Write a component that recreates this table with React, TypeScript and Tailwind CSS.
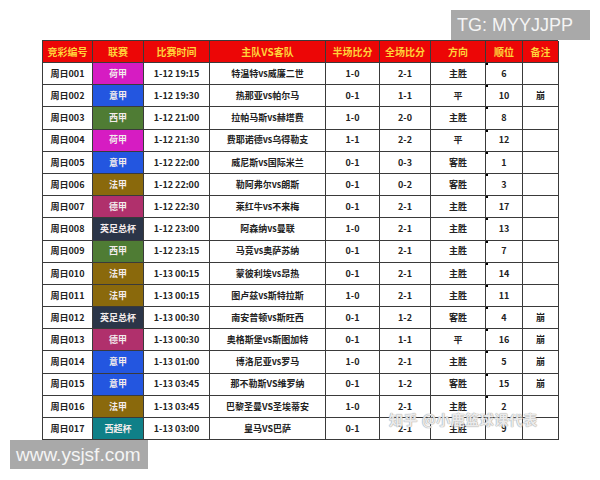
import React from "react";

type Row = {
  id: string;
  league: string;
  time: string;
  teams: string;
  half: string;
  full: string;
  dir: string;
  rank: string;
  note: string;
};

const leagueColor: Record<string, string> = {
  荷甲: "bg-[#d61cc2]",
  意甲: "bg-[#2356e0]",
  西甲: "bg-[#4f7c34]",
  法甲: "bg-[#8a690c]",
  德甲: "bg-[#b0306c]",
  英足总杯: "bg-[#2b3548]",
  西超杯: "bg-[#0f8088]",
};

const rows: Row[] = [
  { id: "周日001", league: "荷甲", time: "1-12 19:15", teams: "特温特vs威廉二世", half: "1-0", full: "2-1", dir: "主胜", rank: "6", note: "" },
  { id: "周日002", league: "意甲", time: "1-12 19:30", teams: "热那亚vs帕尔马", half: "0-1", full: "1-1", dir: "平", rank: "10", note: "崩" },
  { id: "周日003", league: "西甲", time: "1-12 21:00", teams: "拉帕马斯vs赫塔费", half: "1-0", full: "2-0", dir: "主胜", rank: "8", note: "" },
  { id: "周日004", league: "荷甲", time: "1-12 21:30", teams: "费耶诺德vs乌得勒支", half: "1-1", full: "2-2", dir: "平", rank: "12", note: "" },
  { id: "周日005", league: "意甲", time: "1-12 22:00", teams: "威尼斯vs国际米兰", half: "0-1", full: "0-3", dir: "客胜", rank: "1", note: "" },
  { id: "周日006", league: "法甲", time: "1-12 22:00", teams: "勒阿弗尔vs朗斯", half: "0-1", full: "0-2", dir: "客胜", rank: "3", note: "" },
  { id: "周日007", league: "德甲", time: "1-12 22:30", teams: "莱红牛vs不来梅", half: "0-1", full: "2-1", dir: "主胜", rank: "17", note: "" },
  { id: "周日008", league: "英足总杯", time: "1-12 23:00", teams: "阿森纳vs曼联", half: "1-0", full: "2-1", dir: "主胜", rank: "13", note: "" },
  { id: "周日009", league: "西甲", time: "1-12 23:15", teams: "马竞vs奥萨苏纳", half: "0-1", full: "2-1", dir: "主胜", rank: "7", note: "" },
  { id: "周日010", league: "法甲", time: "1-13 00:15", teams: "蒙彼利埃vs昂热", half: "0-1", full: "2-1", dir: "主胜", rank: "14", note: "" },
  { id: "周日011", league: "法甲", time: "1-13 00:15", teams: "图卢兹vs斯特拉斯", half: "1-0", full: "2-1", dir: "主胜", rank: "11", note: "" },
  { id: "周日012", league: "英足总杯", time: "1-13 00:30", teams: "南安普顿vs斯旺西", half: "0-1", full: "1-2", dir: "客胜", rank: "4", note: "崩" },
  { id: "周日013", league: "德甲", time: "1-13 00:30", teams: "奥格斯堡vs斯图加特", half: "0-1", full: "1-1", dir: "平", rank: "16", note: "崩" },
  { id: "周日014", league: "意甲", time: "1-13 01:00", teams: "博洛尼亚vs罗马", half: "1-0", full: "2-1", dir: "主胜", rank: "5", note: "崩" },
  { id: "周日015", league: "意甲", time: "1-13 03:45", teams: "那不勒斯VS维罗纳", half: "0-1", full: "1-2", dir: "客胜", rank: "15", note: "崩" },
  { id: "周日016", league: "法甲", time: "1-13 03:45", teams: "巴黎圣曼VS圣埃蒂安", half: "1-0", full: "2-1", dir: "主胜", rank: "2", note: "" },
  { id: "周日017", league: "西超杯", time: "1-13 03:00", teams: "皇马VS巴萨", half: "0-1", full: "2-1", dir: "主胜", rank: "9", note: "" },
];

const headers = ["竞彩编号", "联赛", "比赛时间", "主队VS客队", "半场比分", "全场比分", "方向", "顺位", "备注"];

const cols = "grid grid-cols-[50px_51px_66px_116px_54px_51px_55px_37px_36px]";
const cell = "flex items-center justify-center border-r border-b border-[#3a3a3a] whitespace-nowrap";

export default function App() {
  return (
    <div
      className="relative w-[600px] h-[480px] bg-white overflow-hidden pt-[10px]"
      style={{ fontFamily: '"Noto Sans CJK SC", "Noto Sans", sans-serif' }}
    >
      <div className="flex justify-end pr-[10px]">
        <div
          className="h-[30px] w-[139px] bg-[#a9a9a9] text-[#f4f4f4] text-[18px] flex items-center pl-[6px] leading-none"
          style={{ fontFamily: '"Liberation Sans", Arial, sans-serif' }}
        >
          TG: MYYJJPP
        </div>
      </div>

      <div className="ml-[42px] w-[516px] border-l border-t border-[#3a3a3a] font-bold">
        <div className={`${cols} h-[22px] bg-[#ec0606]`}>
          {headers.map((h) => (
            <div key={h} className={`${cell} text-[10px] text-[#ffd23a]`}>
              {h}
            </div>
          ))}
        </div>
        {rows.map((r) => (
          <div key={r.id} className={`${cols} h-[22.2px] text-[9px] text-[#222]`}>
            <div className={cell}>{r.id}</div>
            <div className={`${cell} ${leagueColor[r.league]} text-[#f3ecec]`}>{r.league}</div>
            <div className={cell}>{r.time}</div>
            <div className={cell}>{r.teams}</div>
            <div className={cell}>{r.half}</div>
            <div className={cell}>{r.full}</div>
            <div className={cell}>{r.dir}</div>
            <div className={`${cell} relative`}>
              <span className="absolute left-0 top-0 w-[2px] h-[2px] bg-black" />
              {r.rank}
            </div>
            <div className={cell}>{r.note}</div>
          </div>
        ))}
      </div>

      <div
        className="ml-[10px] h-[29px] w-[138px] bg-[#a9a9a9] text-[#f4f4f4] text-[19px] flex items-center pl-[6px] leading-none"
        style={{ fontFamily: '"Liberation Sans", Arial, sans-serif' }}
      >
        www.ysjsf.com
      </div>

      <div className="absolute left-[389px] top-[409px] text-[14px] font-bold text-white/80 [text-shadow:0_0_1px_#9a9a9a,0_0_1px_#9a9a9a] whitespace-nowrap tracking-[0.5px]">
        知乎 @小鹿篮球课代表
      </div>
    </div>
  );
}
